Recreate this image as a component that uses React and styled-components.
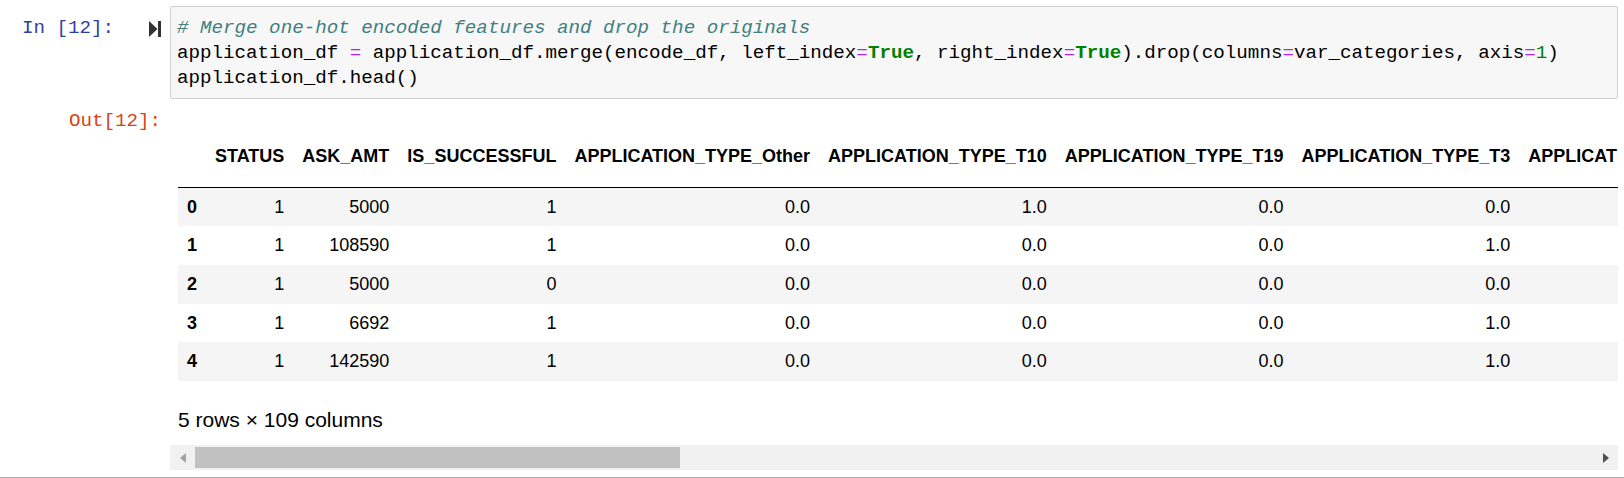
import React from 'react';
import styled, { createGlobalStyle } from 'styled-components';

const GlobalStyle = createGlobalStyle`
  html, body {
    margin: 0;
    padding: 0;
    background: #ffffff;
  }
  body {
    width: 1624px;
    height: 478px;
    overflow: hidden;
    font-family: "Liberation Sans", Arial, sans-serif;
  }
`;

const Notebook = styled.div`
  width: 1624px;
  height: 478px;
  box-sizing: border-box;
  padding-top: 6px;
  display: flex;
  flex-direction: column;
`;

const CellRow = styled.div`
  display: flex;
  align-items: flex-start;
  padding-right: 6px;
`;

const Prompt = styled.div`
  flex: 0 0 170px;
  box-sizing: border-box;
  display: flex;
  align-items: center;
  justify-content: flex-end;
  gap: 35px;
  padding-right: 9px;
  padding-top: ${(p) => (p.$out ? '9.5px' : '10px')};
  font-family: "Liberation Mono", Consolas, monospace;
  font-size: 19.2px;
  line-height: 25px;
  white-space: pre;
  color: ${(p) => (p.$out ? '#D84315' : '#303F9F')};
`;

const RunIcon = styled.svg`
  width: 12px;
  height: 16px;
  flex: 0 0 auto;
  fill: #333333;
`;

const InputArea = styled.div`
  flex: 1;
  min-width: 0;
  border: 1px solid #cfcfcf;
  border-radius: 2px;
  background: #f7f7f7;
  padding: 9px 6px 7px;
  font-family: "Liberation Mono", Consolas, monospace;
  font-size: 19.2px;
  line-height: 25px;
  color: #000000;
  white-space: pre;
  overflow: hidden;
`;

const CodeLine = styled.div`
  height: 25px;
`;

const Comment = styled.span`
  color: #408080;
  font-style: italic;
`;

const Op = styled.span`
  color: #aa22ff;
`;

const Kw = styled.span`
  color: #008000;
  font-weight: bold;
`;

const Num = styled.span`
  color: #008000;
`;

const OutputSub = styled.div`
  flex: 1;
  min-width: 0;
  display: flex;
  flex-direction: column;
`;

const Scroller = styled.div`
  overflow: hidden;
  padding: 27px 0 0 8px;
  padding-bottom: 10px;
`;

const Table = styled.table`
  border-collapse: collapse;
  border-spacing: 0;
  border: none;
  color: #000000;
  font-family: "Liberation Sans", Arial, sans-serif;
  font-size: 18px;
  white-space: nowrap;
`;

const THead = styled.thead`
  border-bottom: 1px solid #000000;
`;

const HeadRow = styled.tr`
  height: 61px;
`;

const HeadCell = styled.th`
  text-align: right;
  vertical-align: middle;
  padding: 0 9px;
  font-weight: bold;
  line-height: 20.7px;
`;

const BodyRow = styled.tr`
  background: ${(p) => (p.$odd ? '#f5f5f5' : 'transparent')};
`;

const IndexCell = styled.th`
  text-align: right;
  vertical-align: middle;
  padding: 9px;
  font-weight: bold;
  line-height: 20.7px;
`;

const Cell = styled.td`
  text-align: right;
  vertical-align: middle;
  padding: 9px;
  line-height: 20.7px;
`;

const Caption = styled.p`
  margin: 24px 0 0 0;
  font-family: "Liberation Sans", Arial, sans-serif;
  font-size: 21px;
  line-height: 30px;
  color: #000000;
`;

const ScrollBar = styled.div`
  height: 25px;
  display: flex;
  background: #f1f1f1;
`;

const ScrollButton = styled.div`
  flex: 0 0 25px;
  display: flex;
  align-items: center;
  justify-content: center;
`;

const Arrow = styled.svg`
  width: 6px;
  height: 10px;
  fill: ${(p) => (p.$disabled ? '#a3a3a3' : '#505050')};
`;

const Track = styled.div`
  flex: 1;
  padding: 2px 0;
`;

const Thumb = styled.div`
  width: 485px;
  height: 21px;
  background: #c1c1c1;
`;

const Divider = styled.div`
  margin-top: 7px;
  height: 2px;
  background: #a9a9a9;
`;

const headers = [
  'STATUS',
  'ASK_AMT',
  'IS_SUCCESSFUL',
  'APPLICATION_TYPE_Other',
  'APPLICATION_TYPE_T10',
  'APPLICATION_TYPE_T19',
  'APPLICATION_TYPE_T3',
  'APPLICATION_TYPE_T4',
  'APPLICATION_TYPE_T5',
  'APPLICATION_TYPE_T6',
];

const rows = [
  ['0', '1', '5000', '1', '0.0', '1.0', '0.0', '0.0', '0.0', '0.0', '0.0'],
  ['1', '1', '108590', '1', '0.0', '0.0', '0.0', '1.0', '0.0', '0.0', '0.0'],
  ['2', '1', '5000', '0', '0.0', '0.0', '0.0', '0.0', '0.0', '1.0', '0.0'],
  ['3', '1', '6692', '1', '0.0', '0.0', '0.0', '1.0', '0.0', '0.0', '0.0'],
  ['4', '1', '142590', '1', '0.0', '0.0', '0.0', '1.0', '0.0', '0.0', '0.0'],
];

export default function App() {
  return (
    <>
      <GlobalStyle />
      <Notebook>
        <CellRow>
          <Prompt>
            <span>In [12]:</span>
            <RunIcon viewBox="0 0 12 16">
              <polygon points="0,0 8.5,8 0,16" />
              <rect x="9" y="0" width="3" height="16" />
            </RunIcon>
          </Prompt>
          <InputArea>
            <CodeLine>
              <Comment># Merge one-hot encoded features and drop the originals</Comment>
            </CodeLine>
            <CodeLine>
              application_df <Op>=</Op> application_df.merge(encode_df, left_index<Op>=</Op>
              <Kw>True</Kw>, right_index<Op>=</Op>
              <Kw>True</Kw>).drop(columns<Op>=</Op>var_categories, axis<Op>=</Op>
              <Num>1</Num>)
            </CodeLine>
            <CodeLine>application_df.head()</CodeLine>
          </InputArea>
        </CellRow>
        <CellRow>
          <Prompt $out>Out[12]:</Prompt>
          <OutputSub>
            <Scroller>
              <Table>
                <THead>
                  <HeadRow>
                    <HeadCell />
                    {headers.map((h) => (
                      <HeadCell key={h}>{h}</HeadCell>
                    ))}
                  </HeadRow>
                </THead>
                <tbody>
                  {rows.map((r, i) => (
                    <BodyRow key={r[0]} $odd={i % 2 === 0}>
                      <IndexCell>{r[0]}</IndexCell>
                      {r.slice(1).map((v, j) => (
                        <Cell key={j}>{v}</Cell>
                      ))}
                    </BodyRow>
                  ))}
                </tbody>
              </Table>
              <Caption>5 rows × 109 columns</Caption>
            </Scroller>
            <ScrollBar>
              <ScrollButton>
                <Arrow viewBox="0 0 6 10" $disabled>
                  <polygon points="6,0 0,5 6,10" />
                </Arrow>
              </ScrollButton>
              <Track>
                <Thumb />
              </Track>
              <ScrollButton>
                <Arrow viewBox="0 0 6 10">
                  <polygon points="0,0 6,5 0,10" />
                </Arrow>
              </ScrollButton>
            </ScrollBar>
          </OutputSub>
        </CellRow>
        <Divider />
      </Notebook>
    </>
  );
}
